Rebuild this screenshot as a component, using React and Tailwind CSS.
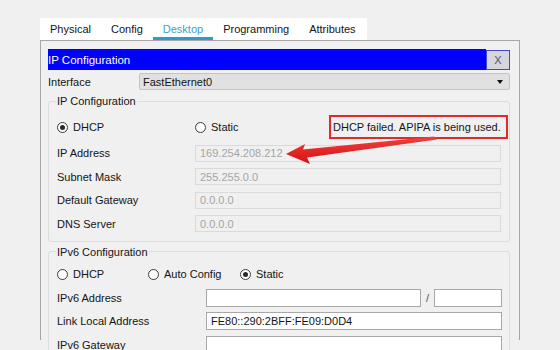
import React from "react";

const font = { fontFamily: '"Liberation Sans", Arial, sans-serif' };

function Radio({ checked, label, className = "" }) {
    return (
        <div className={`flex items-center ${className}`}>
            <span className="w-[11px] h-[11px] rounded-full border border-[#3c3c3c] bg-white flex items-center justify-center">
                {checked && <span className="w-[5px] h-[5px] rounded-full bg-[#2a2a2a]" />}
            </span>
            <span className="ml-[5px]">{label}</span>
        </div>
    );
}

function DisabledRow({ label, value }) {
    return (
        <div className="flex items-center h-[23.5px]">
            <span className="w-[138px] shrink-0">{label}</span>
            <div className="w-[306px] h-[17px] border border-[#dadada] bg-[#f0f0f0] text-[#a5a5a5] pl-[4px] flex items-center">
                {value}
            </div>
        </div>
    );
}

function Field({ className = "", children }) {
    return (
        <div className={`h-[18px] border border-[#a8a8a8] bg-white pl-[4px] flex items-center ${className}`}>
            {children}
        </div>
    );
}

export default function App() {
    const tabs = ["Physical", "Config", "Desktop", "Programming", "Attributes"];

    return (
        <div className="relative w-[560px] h-[350px] overflow-hidden bg-[#f0f0f0] text-[11px] leading-[14px] text-[#141414]" style={font}>
            {/* Tabs */}
            <div className="pt-[18px] pl-[40px]">
                <div className="flex w-[327px] h-[22px] bg-white">
                    {tabs.map((t) => (
                        <div
                            key={t}
                            className={`px-[10px] flex items-center border-b-[3px] ${
                                t === "Desktop" ? "border-[#2f9bcb] text-[#3b9fcb]" : "border-transparent"
                            }`}
                        >
                            <span className="pt-[3px]">{t}</span>
                        </div>
                    ))}
                </div>
            </div>

            {/* Panel */}
            <div className="ml-[40px] w-[480px] h-[300px] border-x border-t border-[#a6a6a6] pl-[7px] pr-[9px] pt-[8px]">
                {/* Title bar */}
                <div className="flex h-[21px]">
                    <div className="flex-1 bg-[#0000ff] text-white flex items-center text-[11.5px]">IP Configuration</div>
                    <div className="w-[24px] bg-[#d6d6de] border border-[#4646c8] flex items-center justify-center text-[#555] mt-[1px]">X</div>
                </div>

                {/* Interface */}
                <div className="flex items-center mt-[3px] h-[17px]">
                    <span className="w-[91px] shrink-0">Interface</span>
                    <div className="flex-1 h-[17px] bg-[#e1e1e1] border border-[#c4c4c4] rounded-[2px] flex items-center pl-[3px] pr-[6px]">
                        <span className="flex-1">FastEthernet0</span>
                        <span className="w-0 h-0 border-x-[3.5px] border-x-transparent border-t-[4px] border-t-[#111]" />
                    </div>
                </div>

                {/* IP Configuration group */}
                <fieldset className="mt-[4px] border border-[#dcdcdc] rounded-[3px] pl-[8px] pr-[8px] pb-[5px]">
                    <legend className="-ml-[1px] px-[1px] leading-[14px]">IP Configuration</legend>
                    <div className="flex items-center h-[24px] mt-[7px] -mr-[7px]">
                        <Radio checked label="DHCP" className="w-[138px]" />
                        <Radio label="Static" />
                        <div className="ml-auto h-[24px] w-[179px] border-2 border-[#e22a2a] flex items-center pl-[2px] whitespace-nowrap">
                            DHCP failed. APIPA is being used.
                        </div>
                    </div>
                    <div className="mt-[2.5px]">
                        <DisabledRow label="IP Address" value="169.254.208.212" />
                        <DisabledRow label="Subnet Mask" value="255.255.0.0" />
                        <DisabledRow label="Default Gateway" value="0.0.0.0" />
                        <DisabledRow label="DNS Server" value="0.0.0.0" />
                    </div>
                </fieldset>

                {/* IPv6 Configuration group */}
                <fieldset className="mt-[3px] border border-[#dcdcdc] rounded-[3px] pl-[8px] pr-[7px] pb-[6px]">
                    <legend className="-ml-[1px] px-[1px] leading-[14px]">IPv6 Configuration</legend>
                    <div className="flex items-center h-[23.5px] mt-[4px]">
                        <Radio label="DHCP" className="w-[91px]" />
                        <Radio label="Auto Config" className="w-[92px]" />
                        <Radio checked label="Static" />
                    </div>
                    <div className="flex items-center h-[23.5px]">
                        <span className="w-[149px] shrink-0">IPv6 Address</span>
                        <Field className="w-[215px]" />
                        <span className="w-[13px] text-center text-[#555]">/</span>
                        <Field className="w-[68px]" />
                    </div>
                    <div className="flex items-center h-[23.5px]">
                        <span className="w-[149px] shrink-0">Link Local Address</span>
                        <Field className="w-[296px]">FE80::290:2BFF:FE09:D0D4</Field>
                    </div>
                    <div className="flex items-center h-[23.5px]">
                        <span className="w-[149px] shrink-0">IPv6 Gateway</span>
                        <Field className="w-[296px]" />
                    </div>
                </fieldset>
            </div>

            {/* Annotation arrow */}
            <svg className="absolute inset-0 pointer-events-none" width="560" height="350" viewBox="0 0 560 350">
                <defs>
                    <linearGradient id="arrowFill" x1="0" y1="0" x2="0" y2="1">
                        <stop offset="0" stopColor="#f04040" />
                        <stop offset="1" stopColor="#d81010" />
                    </linearGradient>
                </defs>
                <polygon
                    points="286,154 305,144 303,149.5 434,136.5 437,139.5 307,157.5 310,164"
                    fill="url(#arrowFill)"
                />
            </svg>
        </div>
    );
}
